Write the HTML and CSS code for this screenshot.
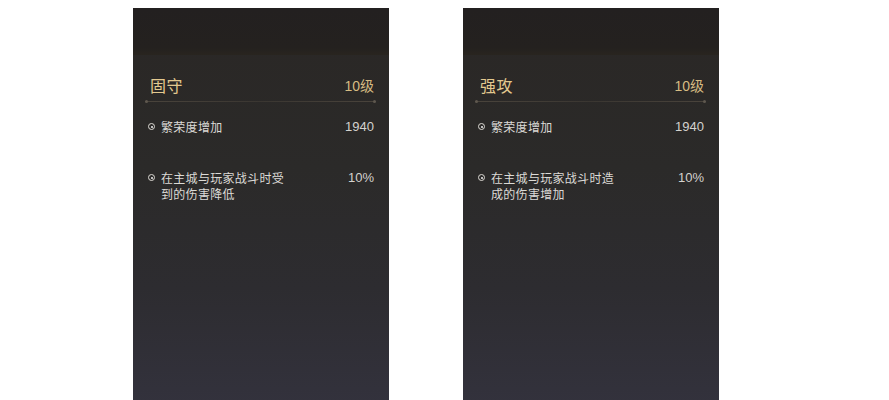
FILE: index.html
```html
<!DOCTYPE html>
<html lang="zh-CN">
<head>
    <meta charset="UTF-8">
    <meta name="viewport" content="width=device-width, initial-scale=1.0">
    <title>城防策略</title>
    <link rel="stylesheet" href="styles.css">
</head>
<body>
    <div class="cards">
        <div class="card">
            <div class="card-top"></div>
            <div class="card-head">
                <span class="card-title">固守</span>
                <span class="card-level">10级</span>
            </div>
            <div class="card-line"></div>
            <ul class="effects">
                <li class="effect">
                    <span class="dot"></span>
                    <span class="effect-name">繁荣度增加</span>
                    <span class="effect-value">1940</span>
                </li>
                <li class="effect effect-long">
                    <span class="dot"></span>
                    <span class="effect-name">在主城与玩家战斗时受<br>到的伤害降低</span>
                    <span class="effect-value">10%</span>
                </li>
            </ul>
        </div>

        <div class="card">
            <div class="card-top"></div>
            <div class="card-head">
                <span class="card-title">强攻</span>
                <span class="card-level">10级</span>
            </div>
            <div class="card-line"></div>
            <ul class="effects">
                <li class="effect">
                    <span class="dot"></span>
                    <span class="effect-name">繁荣度增加</span>
                    <span class="effect-value">1940</span>
                </li>
                <li class="effect effect-long">
                    <span class="dot"></span>
                    <span class="effect-name">在主城与玩家战斗时造<br>成的伤害增加</span>
                    <span class="effect-value">10%</span>
                </li>
            </ul>
        </div>
    </div>
</body>
</html>
```

FILE: styles.css
```css
body {
    margin: 0;
    background-color: #fff;
    font-family: "Noto Sans CJK SC", "Liberation Sans", sans-serif;
    overflow: hidden;
}
.cards {
    display: flex;
    gap: 74px;
    padding: 8px 0 0 133px;
}
.card {
    width: 256px;
    height: 400px;
    display: flex;
    flex-direction: column;
    background: linear-gradient(180deg, #2a2725 0%, #2b2a29 40%, #2d2c30 70%, #33323d 100%);
}
.card-top {
    height: 47px;
    background: linear-gradient(180deg, #232020 0%, #24211f 85%, #29251f 100%);
}
.card-head {
    display: flex;
    justify-content: space-between;
    align-items: center;
    padding: 20px 15px 0 17px;
    height: 20px;
}
.card-title {
    font-size: 16px;
    color: #e3c98f;
    letter-spacing: 0.5px;
}
.card-level {
    font-family: "Liberation Sans", "Noto Sans CJK SC", sans-serif;
    font-size: 14px;
    color: #d6bb82;
}
.card-line {
    position: relative;
    margin: 6px 13px 0 12px;
    height: 1px;
    background: linear-gradient(90deg, #4a443c, #3a3631 50%, #4a443c);
}
.card-line::before,
.card-line::after {
    content: "";
    position: absolute;
    top: -1px;
    width: 3px;
    height: 3px;
    border-radius: 50%;
    background-color: #5f584f;
}
.card-line::before {
    left: 0;
}
.card-line::after {
    right: 0;
}
.effects {
    list-style: none;
    margin: 0;
    padding: 17px 15px 0 15px;
}
.effect {
    display: flex;
    align-items: flex-start;
    color: #dcdad6;
    font-size: 12px;
    line-height: 16px;
    letter-spacing: 0.3px;
}
.effect-long {
    margin-top: 35px;
}
.dot {
    flex: none;
    width: 5px;
    height: 5px;
    margin: 4px 6px 0 0;
    border: 1px solid #dcd9d3;
    border-radius: 50%;
    position: relative;
}
.dot::after {
    content: "";
    position: absolute;
    left: 1.5px;
    top: 1.5px;
    width: 2px;
    height: 2px;
    border-radius: 50%;
    background-color: #f2f2f2;
}
.effect-name {
    flex: 1;
}
.effect-value {
    font-family: "Liberation Sans", sans-serif;
    font-size: 13px;
    color: #d4d2ce;
    letter-spacing: 0;
}
```
